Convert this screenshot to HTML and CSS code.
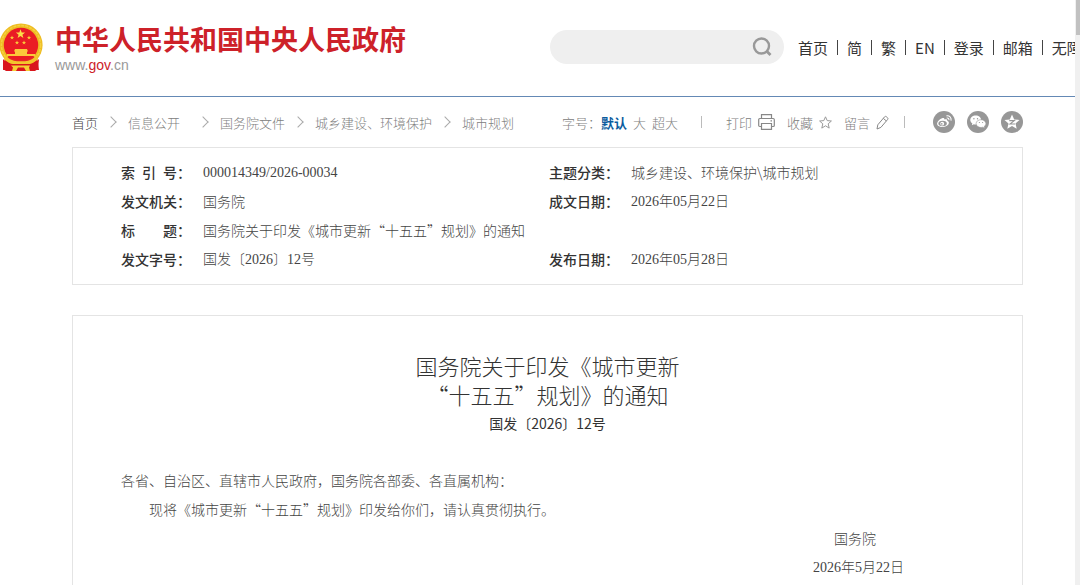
FILE: index.html
```html
<!doctype html>
<html lang="zh-CN">
<head>
    <meta charset="UTF-8">
    <title>国务院关于印发《城市更新“十五五”规划》的通知</title>
    <link rel="stylesheet" href="styles.css">
</head>
<body>

    <div class="header">
        <a class="logo" href="#">
            <svg class="emblem" width="43" height="48" viewBox="0 0 43 48" aria-hidden="true">
                <path d="M5 34L3 47h36l-2-13z" fill="#d9161d"/>
                <circle cx="21" cy="22" r="21.6" fill="#eebc22"/>
                <circle cx="21" cy="22" r="19.6" fill="none" stroke="#f5d040" stroke-width="1.500" stroke-dasharray="3 1"/>
                <circle cx="21" cy="22" r="17.2" fill="#ea1c24"/>
                <path d="M20.500 6.300l1.200 3.200 3.400.1-2.700 2.100 1 3.300-2.900-1.900-2.900 1.900 1-3.300-2.700-2.100 3.400-.1z" fill="#fbe04a"/>
                <path d="M12 12.500l.6 1.400 1.500.1-1.200 1 .4 1.400-1.300-.8-1.300.8.4-1.400-1.200-1 1.500-.1zM29 12.500l.6 1.400 1.500.1-1.200 1 .4 1.400-1.300-.8-1.300.8.4-1.400-1.200-1 1.500-.1zM17 17.500l.6 1.400 1.500.1-1.200 1 .4 1.400-1.300-.8-1.300.8.4-1.400-1.200-1 1.500-.1zM24 17.500l.6 1.400 1.500.1-1.200 1 .4 1.400-1.300-.8-1.300.8.4-1.400-1.200-1 1.500-.1z" fill="#fbc93a"/>
                <path d="M15 26h12l1 2.500h-1V31h8v2H7v-2h8v-2.500h-1z" fill="#fbc93a"/>
                <path d="M6 32c4 8 26 8 30 0l2 4c-5 7-29 7-34 0z" fill="#f3c62c"/>
                <path d="M8 34c6 5 20 5 26 0" fill="none" stroke="#e5282a" stroke-width="1.200"/>
                <path d="M3 36c5 6 11 5 18 5s13 1 18-5l-1 10-3 2H6l-3-2z" fill="#d9161d"/>
                <path d="M11 42.500h19l-1 2 1 3.500h-4l-2-3.500h-6L16 48h-4l1-3.500z" fill="#f6cf35"/>
            </svg>
            <span class="logo-text">
                <span class="logo-name">中华人民共和国中央人民政府</span>
                <span class="logo-url">www.<b>gov</b>.cn</span>
            </span>
        </a>
        <form class="search">
            <input type="text" aria-label="搜索">
            <button type="button" aria-label="搜索">
                <svg width="20" height="20" viewBox="0 0 20 20" fill="none" stroke="#999" stroke-width="2.400"><circle cx="9.500" cy="9" r="7.500"/><path d="M15 14.500l3.500 3.500" stroke-width="2.800"/></svg>
            </button>
        </form>
        <ul class="nav">
            <li><a href="#">首页</a></li>
            <li><a href="#">简</a></li>
            <li><a href="#">繁</a></li>
            <li><a href="#">EN</a></li>
            <li><a href="#">登录</a></li>
            <li><a href="#">邮箱</a></li>
            <li><a href="#">无障碍</a></li>
        </ul>
    </div>

    <div class="container">
        <div class="bar">
            <ul class="crumbs">
                <li class="home"><a href="#">首页</a></li>
                <li class="wide"><a href="#">信息公开</a></li>
                <li><a href="#">国务院文件</a></li>
                <li><a href="#">城乡建设、环境保护</a></li>
                <li><a href="#">城市规划</a></li>
            </ul>
            <div class="tools">
                <div class="font-size">
                    <span>字号：</span>
                    <button type="button" class="active">默认</button>
                    <button type="button">大</button>
                    <button type="button">超大</button>
                </div>
                <div class="actions">
                    <button type="button">打印
                        <svg width="17" height="16" viewBox="0 0 17 16" fill="none" stroke="#888" stroke-width="1.200"><path d="M3.500 4.500V.7h10v3.800M3.500 12.500H1.800C1.100 12.500.7 12 .7 11.500V5.700c0-.7.500-1.200 1.100-1.200h13.400c.7 0 1.100.5 1.100 1.200v5.800c0 .6-.4 1-1.100 1h-1.700M3.500 9.500h10v5.800h-10zM12.500 6.800h1.500"/></svg>
                    </button>
                    <button type="button">收藏
                        <svg width="13" height="13" viewBox="0 0 13 13" fill="none" stroke="#999"><path d="M6.500.8l1.700 3.800 4.200.4-3.200 2.800 1 4.300-3.700-2.300-3.700 2.300 1-4.300L.6 5l4.200-.4z"/></svg>
                    </button>
                    <button type="button">留言
                        <svg width="13" height="15" viewBox="0 0 13 15" fill="none" stroke="#888"><path d="M1 14l.8-4.200L8.500 1.900c.5-.6 1.200-.7 1.800-.2l1.200 1c.6.500.6 1.200.1 1.800L4.900 12.400zM7.300 3.400l3 2.500"/></svg>
                    </button>
                </div>
                <div class="share">
                    <a href="#" aria-label="微博">
                        <svg width="22" height="22" viewBox="0 0 22 22"><circle cx="11" cy="11" r="11" fill="#979797"/><path d="M9 7.200c1.500-.6 2.700-.2 2.400 1.300 1.800-.7 3.300-.2 2.800 1.300 1.300.4 1.900 1.300 1.600 2.400-.6 2.500-3.800 3.800-6.500 3.800-3 0-5.500-1.500-5.200-3.700C4.400 10.200 7 8 9 7.200z" fill="#fff"/><ellipse cx="9.600" cy="12.500" rx="4.200" ry="2.700" fill="#979797"/><circle cx="9.200" cy="12.700" r="1.900" fill="#fff"/><circle cx="8.800" cy="12.900" r=".8" fill="#979797"/><path d="M13.500 4.900c2.800-.6 5.200 1.700 4.500 4.700M13.700 7c1.500-.3 2.500.8 2.200 2.200" fill="none" stroke="#fff" stroke-width="1.100"/></svg>
                    </a>
                    <a href="#" aria-label="微信">
                        <svg width="22" height="22" viewBox="0 0 22 22"><circle cx="11" cy="11" r="11" fill="#979797"/><path d="M8.700 4.600c3.200 0 5.400 2 5.400 4.400s-2.200 4.500-5.400 4.500c-.7 0-1.300-.1-1.900-.3L4.900 14.300l.4-2C4 11.500 3.300 10.300 3.300 9c0-2.400 2.300-4.400 5.400-4.400z" fill="#fff"/><path d="M14 8.700c2.800 0 4.900 1.800 4.900 3.900 0 1.200-.7 2.200-1.700 2.900l.4 1.700-1.800-1c-.6.200-1.200.3-1.800.3-2.800 0-4.900-1.700-4.900-3.900s2.100-3.900 4.900-3.900z" fill="#fff" stroke="#979797" stroke-width=".6"/><g fill="#979797"><circle cx="6.900" cy="7.800" r=".7"/><circle cx="10.500" cy="7.800" r=".7"/><circle cx="12.400" cy="11.500" r=".6"/><circle cx="15.600" cy="11.500" r=".6"/></g></svg>
                    </a>
                    <a href="#" aria-label="QQ空间">
                        <svg width="22" height="22" viewBox="0 0 22 22"><circle cx="11" cy="11" r="11" fill="#979797"/><path d="M11 3.500l2.200 4.900 5.300.5-4 3.600 1.200 5.300-4.700-2.800-4.700 2.800 1.200-5.300-4-3.600 5.300-.5z" fill="#fff"/><path d="M8.300 9.600h5L9 13h5" fill="none" stroke="#979797" stroke-width="1.100"/></svg>
                    </a>
                </div>
            </div>
        </div>

        <div class="box info">
            <table>
                <colgroup><col class="c-label"><col class="c-value"><col class="c-label"><col></colgroup>
                <tr>
                    <th>索&ensp;引&ensp;号：</th><td class="num">000014349/2026-00034</td>
                    <th>主题分类：</th><td>城乡建设、环境保护\城市规划</td>
                </tr>
                <tr>
                    <th>发文机关：</th><td>国务院</td>
                    <th>成文日期：</th><td class="num">2026年05月22日</td>
                </tr>
                <tr>
                    <th>标&emsp;&emsp;题：</th><td colspan="3">国务院关于印发《城市更新“十五五”规划》的通知</td>
                </tr>
                <tr>
                    <th>发文字号：</th><td class="num">国发〔2026〕12号</td>
                    <th>发布日期：</th><td class="num">2026年05月28日</td>
                </tr>
            </table>
        </div>

        <div class="box article">
            <h1>国务院关于印发《城市更新<br>“十五五”规划》的通知</h1>
            <p class="doc-no">国发〔2026〕12号</p>
            <div class="text">
                <p>各省、自治区、直辖市人民政府，国务院各部委、各直属机构：</p>
                <p class="indent">现将《城市更新“十五五”规划》印发给你们，请认真贯彻执行。</p>
                <p class="sign">国务院</p>
                <p class="date num">2026年5月22日</p>
            </div>
        </div>
    </div>

    <div class="scrollbar"><div class="thumb"></div></div>
</body>
</html>
```

FILE: styles.css
```css
*{
    padding: 0;
    margin: 0;
    box-sizing: border-box;
}
body{
    padding-right: 5px;
    background-color: #fff;
    color: #444;
    font: 14px/29px "Noto Sans CJK SC", sans-serif;
    font-weight: 300;
    overflow: hidden;
}
a{
    text-decoration: none;
    color: inherit;
}
ul,li{
    list-style: none;
}
button{
    border: 0;
    background: none;
    color: inherit;
    font: inherit;
    cursor: pointer;
}
svg{
    display: block;
}
.num{
    font-family: "Liberation Serif", "Noto Sans CJK SC", serif;
}

/* 头部 */
.header{
    display: flex;
    align-items: center;
    height: 97px;
    padding-bottom: 2px;
    border-bottom: 1px solid #6489b5;
}
.logo{
    display: flex;
    align-items: center;
    flex: 1;
    gap: 12px;
}
.logo-text{
    display: flex;
    flex-direction: column;
    white-space: nowrap;
}
.logo-name{
    color: #cd2129;
    font-size: 27px;
    font-weight: bold;
    line-height: 36px;
}
.logo-url{
    color: #999;
    font: 14px/16px "Liberation Sans", sans-serif;
}
.logo-url b{
    color: #cd2129;
    font-weight: normal;
}
.search{
    display: flex;
    align-items: center;
    width: 234px;
    height: 34px;
    padding: 0 12px 0 16px;
    border-radius: 17px;
    background-color: #efefef;
}
.search input{
    flex: 1;
    min-width: 0;
    height: 34px;
    border: 0;
    outline: 0;
    background: none;
}
.nav{
    display: flex;
    width: 291px;
    padding-left: 14px;
    overflow: hidden;
    color: #333;
    font-size: 15px;
    font-weight: 400;
    white-space: nowrap;
}
.nav li{
    display: flex;
    align-items: center;
}
.nav li + li:before{
    content: "";
    width: 1px;
    height: 15px;
    margin: 0 9px;
    background-color: #444;
}

/* 面包屑和工具 */
.container{
    padding: 0 52px 0 72px;
}
.bar{
    display: flex;
    align-items: center;
    justify-content: space-between;
    height: 50px;
    color: #808080;
    font-size: 13px;
    white-space: nowrap;
}
.crumbs,
.crumbs li{
    display: flex;
    align-items: center;
}
.crumbs li + li:before{
    content: "";
    width: 7px;
    height: 7px;
    margin: 0 13px 0 9px;
    border-top: 1px solid #aaa;
    border-right: 1px solid #aaa;
    transform: rotate(45deg);
}
.crumbs .home{
    color: #444;
}
.crumbs .wide{
    padding-right: 10px;
}
.tools,
.font-size,
.actions,
.actions button,
.share{
    display: flex;
    align-items: center;
}
.font-size button{
    margin-right: 6px;
}
.font-size .active{
    color: #0b5c9e;
    font-weight: bold;
}
.actions{
    gap: 12px;
    margin-left: 17px;
}
.actions button{
    gap: 6px;
}
.actions:before,
.actions:after{
    content: "";
    width: 1px;
    height: 12px;
    margin: 0 12px 0 0;
    background-color: #bbb;
}
.actions:after{
    margin: 0 0 0 3px;
}
.share{
    gap: 12px;
    margin-left: 28px;
}

/* 公文信息 */
.box{
    border: 1px solid #e4e4e4;
    padding: 10px 48px;
}
.info table{
    width: 100%;
    table-layout: fixed;
    border-collapse: collapse;
}
.info .c-label{
    width: 82px;
}
.info .c-value{
    width: 346px;
}
.info th,
.info td{
    height: 29px;
    text-align: left;
    white-space: nowrap;
}
.info th{
    color: #333;
    font-weight: 500;
}

/* 正文 */
.article{
    margin-top: 30px;
    padding-top: 35px;
}
.article h1{
    color: #333;
    font-size: 22px;
    font-weight: 300;
    text-align: center;
}
.doc-no{
    color: #333;
    font-weight: 400;
    text-align: center;
}
.text{
    margin-top: 28px;
}
.text .indent{
    text-indent: 2em;
}
.text .sign{
    padding-right: 7em;
    text-align: right;
}
.text .date{
    padding-right: 5em;
    text-align: right;
}

.scrollbar{
    position: fixed;
    top: 0;
    right: 0;
    bottom: 0;
    width: 5px;
    background-color: #f0f0f0;
}
.scrollbar .thumb{
    height: 35px;
    margin-left: 1px;
    background-color: #c1c1c1;
}
```
